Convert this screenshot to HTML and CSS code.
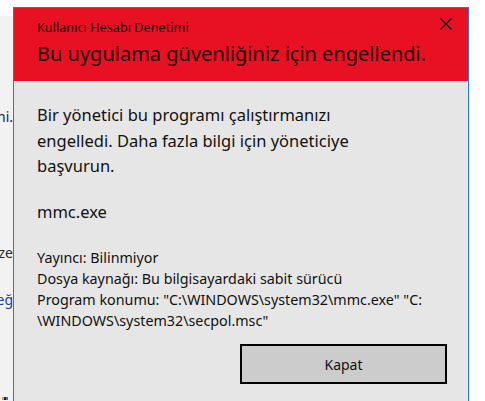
FILE: index.html
```html
<!DOCTYPE html>
<html lang="tr">
<head>
<meta charset="utf-8">
<title>Kullanıcı Hesabı Denetimi</title>
<link rel="stylesheet" href="styles.css">
</head>
<body>
<div class="desktop">
  <div class="top-strip"></div>
  <div class="side">
    <div class="frag frag-hi"><span>Ayrıntılar için tıklayın: hi.</span></div>
    <div class="frag frag-uz"><span>Kullanıcı hesabı ayarlarını değiştirmek üze</span></div>
    <div class="frag frag-g"><span>Güvenlik ve bakım ayarlarını değiştirin ayarı değ</span></div>
    <div class="frag-icon"><span class="sq sq1"></span><span class="sq sq2"></span><span class="sq sq3"></span></div>
  </div>
</div>

<div class="dialog" role="dialog" aria-labelledby="dlg-title">
  <div class="header">
    <div class="header-row">
      <div class="caption">Kullanıcı Hesabı Denetimi</div>
      <button class="close" aria-label="Kapat">
        <svg width="12" height="12" viewBox="0 0 12 12" aria-hidden="true"><path d="M0.5 0.5 L11.5 11.5 M11.5 0.5 L0.5 11.5" stroke="#111" stroke-width="1.2" fill="none"/></svg>
      </button>
    </div>
    <div class="title" id="dlg-title">Bu uygulama güvenliğiniz için engellendi.</div>
  </div>
  <div class="body">
    <p class="message">Bir yönetici bu programı çalıştırmanızı engelledi. Daha fazla bilgi için yöneticiye başvurun.</p>
    <p class="program">mmc.exe</p>
    <div class="details">
      <div>Yayıncı: Bilinmiyor</div>
      <div>Dosya kaynağı: Bu bilgisayardaki sabit sürücü</div>
      <div>Program konumu: "C:\WINDOWS\system32\mmc.exe" "C:<br>\WINDOWS\system32\secpol.msc"</div>
    </div>
    <div class="actions">
      <button class="btn">Kapat</button>
    </div>
  </div>
</div>
</body>
</html>
```

FILE: styles.css
```css
html, body {
  margin: 0;
  padding: 0;
  background: #ffffff;
  overflow: hidden;
}
body {
  width: 485px;
  height: 401px;
  position: relative;
  font-family: "Noto Sans", "Open Sans", sans-serif;
}

.desktop {
  display: flex;
  flex-direction: column;
  height: 401px;
}
.top-strip {
  height: 16px;
  background: #ffffff;
}
.side {
  width: 40px;
  flex: 1;
  background: #f2f2f2;
  display: flex;
  flex-direction: column;
}
.frag {
  width: 13px;
  overflow: hidden;
  display: flex;
  justify-content: flex-end;
  white-space: nowrap;
}
.frag span {
  flex: none;
}
.frag-hi {
  margin-top: 91px;
  font-size: 14px;
  line-height: 20px;
  color: #1b1b5e;
}
.frag-uz {
  margin-top: 116px;
  font-size: 14px;
  line-height: 20px;
  color: #2a2a2a;
}
.frag-g {
  margin-top: 26px;
  font-size: 14px;
  line-height: 22px;
  color: #1c3f9e;
}
.frag-icon {
  margin-top: auto;
  display: flex;
  height: 4px;
  padding-left: 2px;
}
.sq { width: 2px; height: 3px; }
.sq1 { background: #e0a040; }
.sq2 { background: #222; }
.sq3 { background: #3a78d0; }

.dialog {
  position: absolute;
  left: 13px;
  top: 7px;
  width: 454px;
  height: 393px;
  border: 1px solid #1a7fd4;
  border-bottom: 0;
  background: #e6e6e6;
  display: flex;
  flex-direction: column;
  overflow: hidden;
}

.header {
  background: #e81123;
  height: 73px;
  flex: none;
  box-sizing: border-box;
  padding: 11px 16px 0 23px;
  color: #1a0003;
}
.header-row {
  display: flex;
  justify-content: space-between;
  align-items: flex-start;
}
.caption {
  font-size: 12.7px;
  line-height: 16px;
}
.close {
  border: 0;
  background: transparent;
  padding: 0;
  margin-top: -1px;
  width: 12px;
  height: 12px;
  display: flex;
}
.title {
  margin-top: 5px;
  font-size: 20px;
  line-height: 28px;
  color: #1a0003;
}

.body {
  padding: 21px 21px 0 23px;
  color: #111;
}
.message {
  margin: 0;
  font-size: 16.5px;
  line-height: 25.5px;
  width: 350px;
}
.program {
  margin: 20px 0 0;
  font-size: 16.5px;
  line-height: 25.5px;
}
.details {
  margin-top: 23px;
  font-size: 14.3px;
  line-height: 21px;
}
.actions {
  margin-top: 13px;
  display: flex;
  justify-content: flex-end;
}
.btn {
  width: 207px;
  height: 40px;
  box-sizing: border-box;
  border: 2px solid #000;
  background: #cccccc;
  font-family: "Noto Sans", "Open Sans", sans-serif;
  font-size: 14px;
  color: #111;
  padding: 0;
}
```
